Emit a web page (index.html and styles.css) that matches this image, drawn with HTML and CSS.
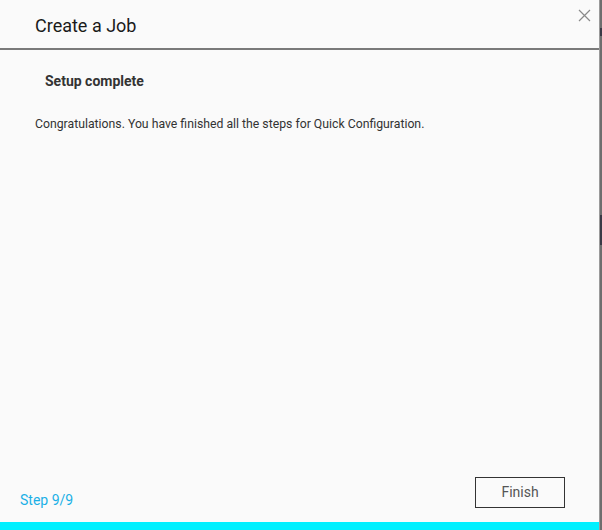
FILE: index.html
```html
<!DOCTYPE html>
<html>
<head>
<meta charset="utf-8">
<link rel="stylesheet" href="styles.css">
</head>
<body>
<div class="page">
  <div class="dialog">
    <div class="header">
      <h1 class="title">Create a Job</h1>
      <button class="close" aria-label="Close">
        <svg width="13" height="13" viewBox="0 0 13 13"><path d="M1 1L12 12M12 1L1 12" stroke="#8a8a8a" stroke-width="1.2" fill="none"/></svg>
      </button>
    </div>
    <div class="content">
      <h2 class="subtitle">Setup complete</h2>
      <p class="message">Congratulations. You have finished all the steps for Quick Configuration.</p>
    </div>
    <div class="footer">
      <span class="step">Step 9/9</span>
      <button class="finish">Finish</button>
    </div>
    <div class="bottom-bar"></div>
  </div>
  <div class="edge">
    <div class="edge-dark a"></div>
    <div class="edge-dark b"></div>
  </div>
</div>
</body>
</html>
```
FILE: styles.css
```css
html, body {
  margin: 0;
  padding: 0;
  background: #fafafa;
}
.page {
  display: flex;
  width: 602px;
  height: 530px;
  font-family: Roboto, "Liberation Sans", sans-serif;
}
.dialog {
  width: 599px;
  height: 530px;
  background: #fafafa;
  display: flex;
  flex-direction: column;
}
.header {
  height: 48px;
  border-bottom: 2px solid #7a7a7a;
  box-sizing: content-box;
  display: flex;
  align-items: flex-start;
  justify-content: space-between;
}
.title {
  margin: 15px 0 0 35px;
  font-size: 18px;
  font-weight: 400;
  color: #1a1a1a;
  line-height: 22px;
}
.close {
  margin: 9px 8px 0 0;
  padding: 0;
  border: none;
  background: none;
  width: 13px;
  height: 13px;
  display: flex;
}
.content {
  flex: 1;
  padding: 0 0 0 35px;
}
.subtitle {
  margin: 22px 0 0 10px;
  font-size: 14px;
  font-weight: 700;
  color: #333;
  line-height: 18px;
}
.message {
  margin: 27px 0 0 0;
  font-size: 12.25px;
  color: #333;
  line-height: 14px;
}
.footer {
  height: 45px;
  display: flex;
  align-items: flex-start;
  justify-content: space-between;
  padding: 0 34px 0 20px;
}
.step {
  margin-top: 15px;
  font-size: 14px;
  color: #1ab0e6;
  line-height: 16px;
}
.finish {
  width: 90px;
  height: 31px;
  border: 1px solid #333;
  background: #fafafa;
  font-family: Roboto, "Liberation Sans", sans-serif;
  font-size: 14px;
  color: #555;
  padding: 0 0 2px 0;
}
.bottom-bar {
  height: 8px;
  background: #00f0ff;
}
.edge {
  width: 3px;
  height: 530px;
  background: #6e6e6e;
  border-left: 1px solid #9a9a9a;
  box-sizing: border-box;
  display: flex;
  flex-direction: column;
}
.edge-dark {
  background: #3a3a46;
}
.edge-dark.a {
  margin-top: 28px;
  height: 8px;
}
.edge-dark.b {
  margin-top: 179px;
  height: 30px;
}
```
